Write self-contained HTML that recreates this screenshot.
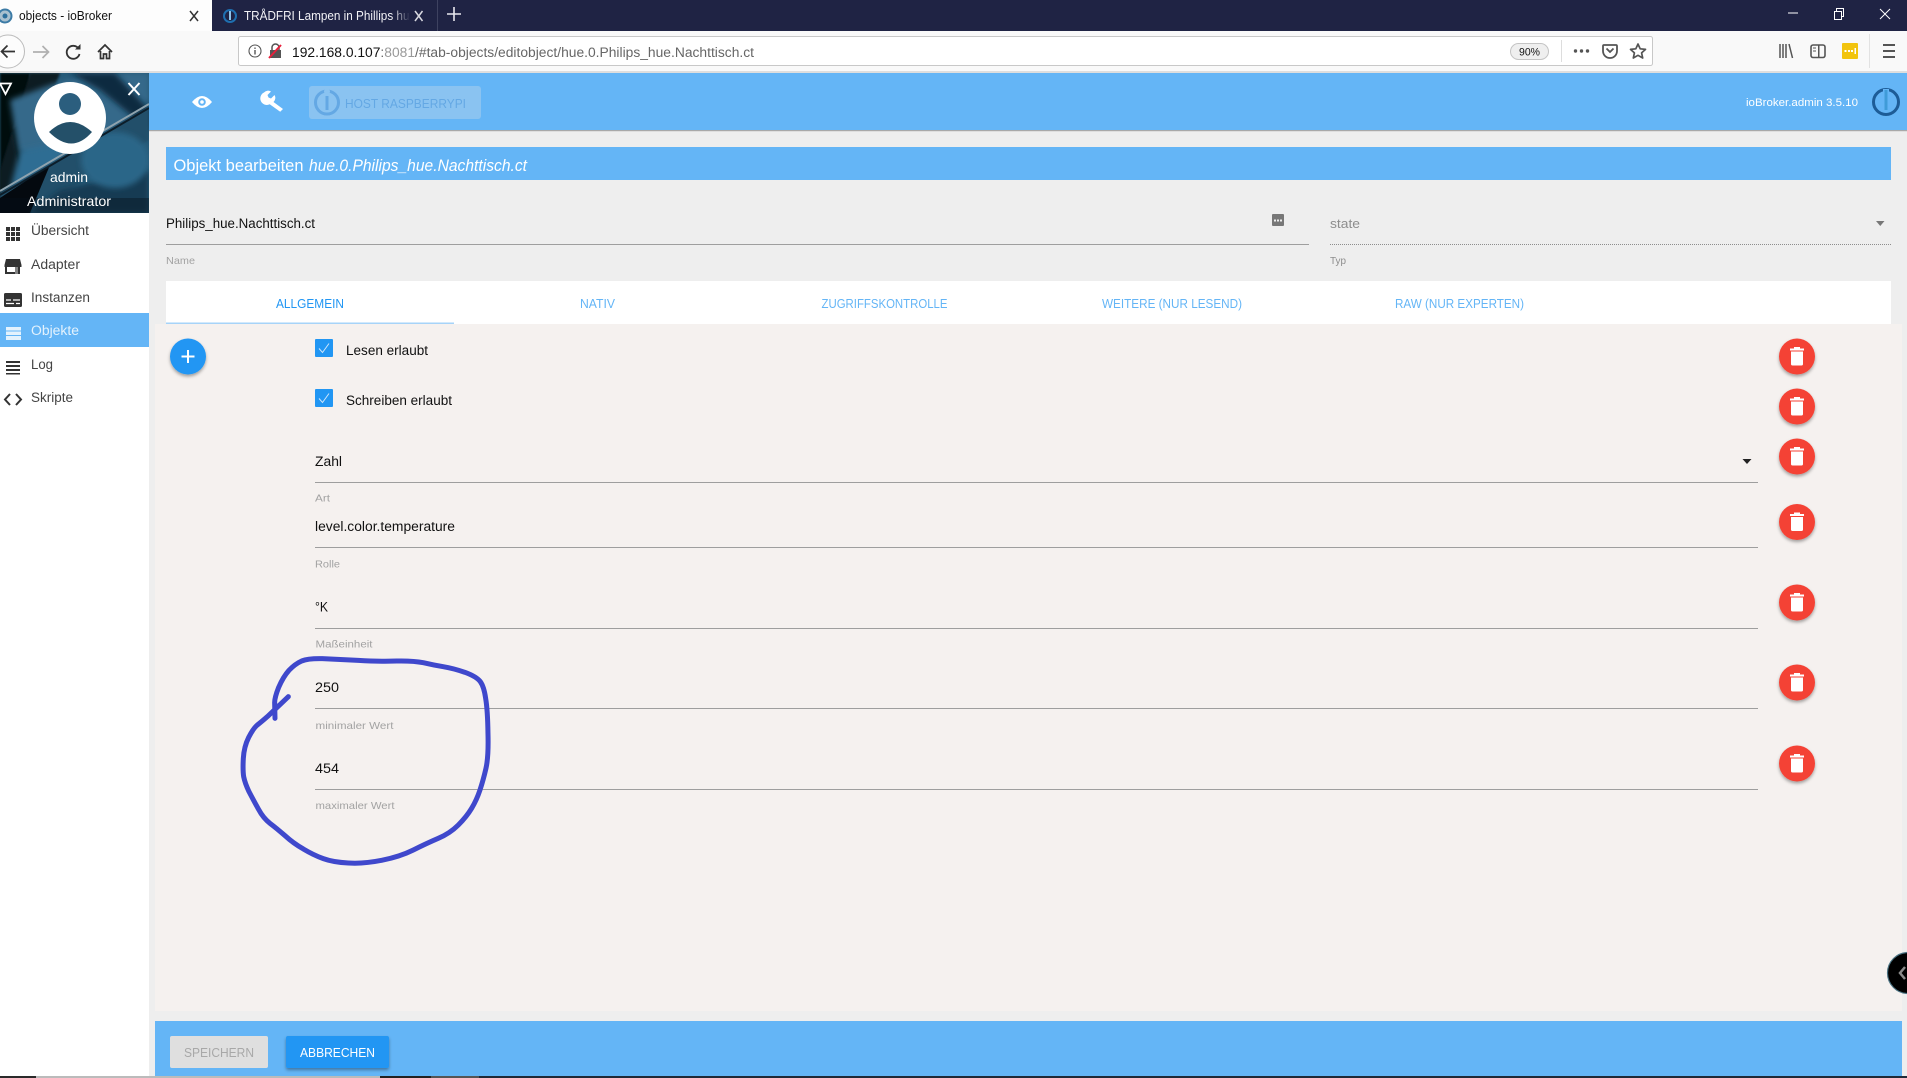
<!DOCTYPE html>
<html lang="de">
<head>
<meta charset="utf-8">
<title>objects - ioBroker</title>
<style>
html,body{margin:0;padding:0;width:1907px;height:1078px;overflow:hidden;background:#eee}
svg{display:block;position:absolute;left:0;top:0}
text{font-family:"Liberation Sans","DejaVu Sans",sans-serif;white-space:pre}
.m{font-size:13.5px;fill:#444}
.l{font-size:10.5px;fill:#a2a2a2}
.v{font-size:13.5px;fill:#111}
.t{font-size:12.5px;fill:#64b5f6}
</style>
</head>
<body>
<svg width="1907" height="1078" viewBox="0 0 1907 1078" xmlns="http://www.w3.org/2000/svg">
<defs>
<clipPath id="av"><rect x="0" y="73" width="149" height="140"/></clipPath>
<clipPath id="tab2"><rect x="212" y="0" width="198" height="31"/></clipPath>
<filter id="b3" x="-30%" y="-30%" width="160%" height="160%"><feGaussianBlur stdDeviation="3"/></filter>
<filter id="b1" x="-30%" y="-30%" width="160%" height="160%"><feGaussianBlur stdDeviation="1"/></filter>
<filter id="sh" x="-30%" y="-30%" width="160%" height="170%"><feDropShadow dx="0" dy="2" stdDeviation="1.6" flood-color="#000" flood-opacity=".35"/></filter>
<linearGradient id="fade" x1="0" x2="1"><stop offset="0" stop-color="#1f2344" stop-opacity="0"/><stop offset="1" stop-color="#1f2344"/></linearGradient>
<g id="trash">
<circle r="18" fill="#f44336" filter="url(#sh)"/>
<rect x="-7" y="-8" width="14" height="2" fill="#fff"/>
<rect x="-3" y="-9.5" width="6" height="2" fill="#fff"/>
<path d="M-6-5H6V7.5Q6 9 4.500 9H-4.500Q-6 9-6 7.500Z" fill="#fff"/>
</g>
<g id="chk">
<rect width="18" height="18" rx="1" fill="#2196f3"/>
<path d="M4 9.500L7.500 13.500L14 4.500" fill="none" stroke="#cfe6fb" stroke-width="1"/>
</g>
</defs>

<!-- browser chrome -->
<rect width="1907" height="31" fill="#1f2344"/>
<rect width="212" height="31" fill="#fdfdfd"/>
<rect y="31" width="1907" height="40" fill="#f9f9f9"/>
<rect y="71" width="1907" height="2" fill="#dedede"/>

<circle cx="5" cy="16" r="6.500" fill="#a9c0cf" stroke="#3c7ba6" stroke-width="2"/>
<circle cx="5" cy="16" r="2.500" fill="#2d6f9c"/>
<text x="19" y="20" font-size="12.500" fill="#111" textLength="93" lengthAdjust="spacingAndGlyphs">objects - ioBroker</text>
<path d="M190 11l8 10M198 11l-8 10" stroke="#333" stroke-width="1.500"/>
<circle cx="230" cy="16" r="6" fill="none" stroke="#1e6fb0" stroke-width="2"/>
<rect x="229" y="11" width="2" height="9" fill="#8fc4ea"/>
<g clip-path="url(#tab2)"><text x="244" y="20" font-size="12.500" fill="#f2f2f6" textLength="172" lengthAdjust="spacingAndGlyphs">TRÅDFRI Lampen in Phillips hue</text></g>
<rect x="392" y="3" width="18" height="26" fill="url(#fade)"/>
<path d="M415 11l7.500 10M422.500 11l-7.500 10" stroke="#d8d8e0" stroke-width="1.500"/>
<rect x="437" y="0" width="1" height="31" fill="#3e4260"/>
<path d="M454 7v14M447 14h14" stroke="#e8e8ee" stroke-width="1.600"/>
<path d="M1788 13h10" stroke="#fff" stroke-width="1"/>
<rect x="1834.500" y="11.500" width="7" height="8" fill="none" stroke="#fff"/>
<path d="M1836.500 11V8.500h7V16.500H1842" fill="none" stroke="#fff"/>
<path d="M1880 9l10 10M1890 9l-10 10" stroke="#fff" stroke-width="1"/>

<circle cx="8" cy="51.500" r="16.500" fill="#fcfcfc" stroke="#bbb"/>
<path d="M15 51.500H2M7.500 45.500l-6 6 6 6" fill="none" stroke="#333" stroke-width="1.700"/>
<path d="M33 52H48M42.500 46l6 6-6 6" fill="none" stroke="#b0b0b0" stroke-width="1.700"/>
<path d="M78.500 48.500A6.500 6.500 0 1 0 79.500 54" fill="none" stroke="#333" stroke-width="1.800"/>
<path d="M75 49.500h5.500V44z" fill="#333"/>
<path d="M98 52l7-7 7 7M100.500 51v7.500h3V54h3v4.500h3V51" fill="none" stroke="#333" stroke-width="1.700"/>

<rect x="238.500" y="36.500" width="1414" height="29" rx="2" fill="#fff" stroke="#c8c8c8"/>
<circle cx="255" cy="51" r="6" fill="none" stroke="#555" stroke-width="1.100"/>
<rect x="254.300" y="50" width="1.400" height="4.500" fill="#555"/><rect x="254.300" y="47.500" width="1.400" height="1.400" fill="#555"/>
<rect x="270" y="50" width="11" height="8" fill="#555"/>
<path d="M272 50v-2.500a3.500 3.500 0 0 1 7 0V50" fill="none" stroke="#555" stroke-width="1.500"/>
<path d="M269 58L281 45" stroke="#e8203c" stroke-width="2"/>
<text x="292" y="57" font-size="13.500" fill="#666" textLength="462" lengthAdjust="spacingAndGlyphs"><tspan fill="#111">192.168.0.107</tspan>:<tspan fill="#999">8081</tspan>/#tab-objects/editobject/hue.0.Philips_hue.Nachttisch.ct</text>
<rect x="1510.500" y="43.500" width="38" height="16" rx="8" fill="#efefef" stroke="#c4c4c4"/>
<text x="1519" y="55.500" font-size="11" fill="#111" textLength="21" lengthAdjust="spacingAndGlyphs">90%</text>
<rect x="1561" y="40" width="1" height="22" fill="#ddd"/>
<g fill="#555"><circle cx="1575.500" cy="51" r="1.700"/><circle cx="1581.500" cy="51" r="1.700"/><circle cx="1587.500" cy="51" r="1.700"/></g>
<path d="M1603 46a1 1 0 0 1 1-1h12a1 1 0 0 1 1 1v5a7 7 0 0 1-14 0z" fill="none" stroke="#555" stroke-width="1.800"/>
<path d="M1606.500 48.500l3.500 3.500 3.500-3.500" fill="none" stroke="#555" stroke-width="1.800"/>
<path d="M1638 44l2.200 4.800 5.300.6-3.900 3.500 1.100 5.100-4.700-2.700-4.700 2.700 1.100-5.100-3.900-3.500 5.300-.6z" fill="none" stroke="#555" stroke-width="1.700" stroke-linejoin="round"/>
<path d="M1780 44v14M1783 44v14M1786 44v14M1789 44l3.500 14" stroke="#555" stroke-width="1.500" fill="none"/>
<rect x="1811" y="45" width="14" height="12.500" rx="2" fill="none" stroke="#555" stroke-width="1.600"/>
<rect x="1818" y="45" width="1.500" height="12" fill="#555"/><path d="M1813 48h3M1813 51h3" stroke="#555"/>
<rect x="1842" y="43" width="16" height="16" rx="1" fill="#f2c40e"/>
<g fill="#fff"><rect x="1844.500" y="50" width="2" height="2"/><rect x="1848" y="50" width="2" height="2"/><rect x="1851" y="50" width="2" height="2"/><rect x="1854.500" y="48" width="1.500" height="6"/></g>
<rect x="1869" y="34" width="1" height="34" fill="#e2e2e2"/>
<path d="M1883 45h12M1883 51h12M1883 57h12" stroke="#555" stroke-width="2"/>

<!-- header -->
<rect x="149" y="73" width="1758" height="57" fill="#64b5f6"/>
<rect x="149" y="130" width="1758" height="1" fill="#a8a8a8"/>
<rect x="149" y="131" width="1758" height="1" fill="#dedede"/>
<path d="M192 102q10-12 20 0q-10 12-20 0z" fill="#fff"/>
<circle cx="202" cy="102" r="3.800" fill="#64b5f6"/><circle cx="202" cy="102" r="1.800" fill="#fff"/>
<path d="M263 93.500a5.500 5.500 0 0 1 7-1l-3.500 3.500 1 2.500 2.500 1 3.500-3.500a5.500 5.500 0 0 1-1 7L282 110l-2.800 2.800-10.500-7.500a5.500 5.500 0 0 1-5.700-11.800z" fill="#fff" transform="translate(1 -1)"/>
<rect x="309" y="86" width="172" height="33" rx="3" fill="#8ac3f1"/>
<circle cx="327" cy="102.500" r="11.500" fill="none" stroke="#64a8e4" stroke-width="3"/>
<rect x="325.500" y="96" width="3" height="14" fill="#64a8e4"/>
<circle cx="327" cy="91.500" r="3" fill="#8ac3f1"/>
<text x="345" y="108" font-size="13" fill="#64a8e4" textLength="121" lengthAdjust="spacingAndGlyphs">HOST RASPBERRYPI</text>
<text x="1746" y="106" font-size="11" fill="#fff" textLength="112" lengthAdjust="spacingAndGlyphs">ioBroker.admin 3.5.10</text>
<circle cx="1886" cy="102" r="12.500" fill="none" stroke="#1d5c97" stroke-width="3"/>
<rect x="1883" y="89" width="6" height="4" fill="#64b5f6"/>
<rect x="1884.500" y="90" width="3" height="20" fill="#3f9bd8"/>

<!-- sidebar -->
<rect x="0" y="213" width="149" height="863" fill="#fff"/>
<g clip-path="url(#av)">
<rect x="0" y="73" width="149" height="140" fill="#265a78"/>
<rect x="0" y="73" width="30" height="140" fill="#05090d" filter="url(#b1)"/>
<path d="M0 170L30 73H60L50 100L12 130L20 175L0 215z" fill="#0b1a24" filter="url(#b1)"/>
<path d="M10 100L50 85L90 73H149L149 100L60 180L18 150z" fill="#36698a" filter="url(#b3)"/>
<path d="M70 73L115 73L149 110V130L100 90z" fill="#0f2c40" filter="url(#b3)"/>
<path d="M20 150L70 140L40 190L10 190z" fill="#2e6d93" filter="url(#b3)"/>
<path d="M0 192L149 106V140L60 195L0 213z" fill="#234f6a" filter="url(#b1)"/>
<path d="M0 198L50 165L30 213H0z" fill="#04090f"/>
<path d="M30 213L60 190L149 170V213z" fill="#163a52" filter="url(#b3)"/>
<ellipse cx="115" cy="160" rx="34" ry="28" fill="#2c6688" filter="url(#b3)"/>
<path d="M0 191L149 104" stroke="#8fa3ae" stroke-width="2"/>
<path d="M0 195L149 108" stroke="#0c1d29" stroke-width="2"/>
<rect x="0" y="198" width="149" height="15" fill="#05101a" opacity=".4"/>
</g>
<circle cx="70" cy="118" r="36" fill="#fff"/>
<circle cx="70" cy="104" r="11" fill="#2b5e7e"/>
<path d="M49 132Q70 112 92 132Q72 155 49 132z" fill="#245069"/>
<path d="M0 83.500H11L5.500 94z" fill="none" stroke="#fff" stroke-width="1.800"/>
<path d="M128.500 83l11 12M139.500 83l-11 12" stroke="#fff" stroke-width="2"/>
<text x="50" y="182" font-size="14" fill="#fff" textLength="38" lengthAdjust="spacingAndGlyphs">admin</text>
<text x="27" y="206" font-size="14" fill="#fff" textLength="84" lengthAdjust="spacingAndGlyphs">Administrator</text>

<rect x="0" y="313" width="149" height="34" fill="#64b5f6"/>
<text class="m" x="31" y="235" textLength="58" lengthAdjust="spacingAndGlyphs">Übersicht</text>
<text class="m" x="31" y="269" textLength="49" lengthAdjust="spacingAndGlyphs">Adapter</text>
<text class="m" x="31" y="302" textLength="59" lengthAdjust="spacingAndGlyphs">Instanzen</text>
<text class="m" x="31" y="335" style="fill:#e3f2fd" textLength="48" lengthAdjust="spacingAndGlyphs">Objekte</text>
<text class="m" x="31" y="369" textLength="22" lengthAdjust="spacingAndGlyphs">Log</text>
<text class="m" x="31" y="402" textLength="42" lengthAdjust="spacingAndGlyphs">Skripte</text>
<g fill="#333">
<rect x="6" y="227" width="4" height="4"/><rect x="11" y="227" width="4" height="4"/><rect x="16" y="227" width="4" height="4"/>
<rect x="6" y="232" width="4" height="4"/><rect x="11" y="232" width="4" height="4"/><rect x="16" y="232" width="4" height="4"/>
<rect x="6" y="237" width="4" height="4"/><rect x="11" y="237" width="4" height="4"/><rect x="16" y="237" width="4" height="4"/>
<path d="M6 259H20L21.500 265V267H20V274H5V267H4.500V265z"/>
<rect x="4" y="293" width="18" height="14" rx="1.500"/>
<rect x="6" y="361" width="14" height="2"/><rect x="6" y="365" width="14" height="2"/><rect x="6" y="369" width="14" height="2"/><rect x="6" y="373" width="14" height="1.500"/>
</g>
<rect x="7" y="267" width="8" height="5" fill="#fff"/>
<rect x="15" y="267" width="3" height="7" fill="#fff" opacity=".4"/>
<path d="M6 300h5M13 300h7M6 303.500h8M16 303.500h4" stroke="#fff" stroke-width="1.200"/>
<g fill="#e3f2fd"><rect x="6" y="327" width="15" height="3.500"/><rect x="6" y="331.500" width="15" height="3.500"/><rect x="6" y="336" width="15" height="4"/></g>
<path d="M10 394l-5 5.500 5 5.500M16 394l5 5.500-5 5.500" fill="none" stroke="#333" stroke-width="2"/>

<!-- title -->
<rect x="166" y="147" width="1725" height="33" fill="#64b5f6"/>
<text x="173.500" y="171" font-size="16.500" fill="#fff" textLength="130" lengthAdjust="spacingAndGlyphs">Objekt bearbeiten</text>
<text x="309" y="171" font-size="16.500" font-style="italic" fill="#fff" textLength="218" lengthAdjust="spacingAndGlyphs">hue.0.Philips_hue.Nachttisch.ct</text>

<!-- name/type -->
<text class="v" x="166" y="228" textLength="149" lengthAdjust="spacingAndGlyphs">Philips_hue.Nachttisch.ct</text>
<rect x="166" y="244" width="1143" height="1" fill="#9e9e9e"/>
<text class="l" x="166" y="264" textLength="29" lengthAdjust="spacingAndGlyphs">Name</text>
<rect x="1272" y="214" width="12" height="12" rx="1" fill="#777"/>
<g fill="#eee"><rect x="1274" y="219.500" width="2" height="2"/><rect x="1277" y="219.500" width="2" height="2"/><rect x="1280" y="219.500" width="2" height="2"/></g>
<text x="1330" y="228" font-size="13" fill="#8d8d8d" textLength="30" lengthAdjust="spacingAndGlyphs">state</text>
<path d="M1330 244.500H1891" stroke="#8d8d8d" stroke-dasharray="1 1"/>
<text x="1330" y="264" font-size="10.500" fill="#8d8d8d" textLength="16" lengthAdjust="spacingAndGlyphs">Typ</text>
<path d="M1876 221H1884.500L1880.250 226z" fill="#777"/>

<!-- tabs -->
<rect x="166" y="281" width="1725" height="43" fill="#fff"/>
<text class="t" x="276" y="308" style="fill:#2196f3" textLength="68" lengthAdjust="spacingAndGlyphs">ALLGEMEIN</text>
<text class="t" x="580" y="308" textLength="35" lengthAdjust="spacingAndGlyphs">NATIV</text>
<text class="t" x="821.500" y="308" textLength="126" lengthAdjust="spacingAndGlyphs">ZUGRIFFSKONTROLLE</text>
<text class="t" x="1102" y="308" textLength="140" lengthAdjust="spacingAndGlyphs">WEITERE (NUR LESEND)</text>
<text class="t" x="1395" y="308" textLength="129" lengthAdjust="spacingAndGlyphs">RAW (NUR EXPERTEN)</text>

<!-- panel -->
<rect x="155" y="324" width="1747" height="687" fill="#f5f1ef"/>
<rect x="166" y="322.500" width="288" height="1.500" fill="#a6d3f8"/>

<circle cx="188" cy="356.500" r="18" fill="#2196f3" filter="url(#sh)"/>
<path d="M188 350v13M181.500 356.500h13" stroke="#fff" stroke-width="2"/>

<use href="#chk" x="315" y="339"/>
<use href="#chk" x="315" y="389"/>
<text class="v" x="346" y="355" textLength="82" lengthAdjust="spacingAndGlyphs">Lesen erlaubt</text>
<text class="v" x="346" y="405" textLength="106" lengthAdjust="spacingAndGlyphs">Schreiben erlaubt</text>

<text class="v" x="315" y="466" textLength="27" lengthAdjust="spacingAndGlyphs">Zahl</text>
<path d="M1742.500 459H1751.500L1747 464z" fill="#222"/>
<rect x="315" y="482" width="1443" height="1" fill="#9e9e9e"/>
<text class="l" x="315" y="501.500" textLength="15" lengthAdjust="spacingAndGlyphs">Art</text>
<text class="v" x="315" y="531" textLength="140" lengthAdjust="spacingAndGlyphs">level.color.temperature</text>
<rect x="315" y="547" width="1443" height="1" fill="#9e9e9e"/>
<text class="l" x="315" y="567.500" textLength="25" lengthAdjust="spacingAndGlyphs">Rolle</text>
<text class="v" x="315" y="611.500" textLength="13" lengthAdjust="spacingAndGlyphs">°K</text>
<rect x="315" y="628" width="1443" height="1" fill="#9e9e9e"/>
<text class="l" x="315.500" y="647.500" textLength="57" lengthAdjust="spacingAndGlyphs">Maßeinheit</text>
<text class="v" x="315" y="692" textLength="24" lengthAdjust="spacingAndGlyphs">250</text>
<rect x="315" y="708" width="1443" height="1" fill="#9e9e9e"/>
<text class="l" x="315.500" y="729" textLength="78" lengthAdjust="spacingAndGlyphs">minimaler Wert</text>
<text class="v" x="315" y="773" textLength="24" lengthAdjust="spacingAndGlyphs">454</text>
<rect x="315" y="789" width="1443" height="1" fill="#9e9e9e"/>
<text class="l" x="315.500" y="809" textLength="79" lengthAdjust="spacingAndGlyphs">maximaler Wert</text>

<use href="#trash" x="1797" y="356.500"/>
<use href="#trash" x="1797" y="406.500"/>
<use href="#trash" x="1797" y="456.500"/>
<use href="#trash" x="1797" y="522"/>
<use href="#trash" x="1797" y="602.500"/>
<use href="#trash" x="1797" y="682.500"/>
<use href="#trash" x="1797" y="763.500"/>

<!-- hand-drawn circle -->
<g transform="translate(220 640) scale(.3333)" fill="none" stroke="#3f48cc" stroke-width="15" stroke-linecap="round" stroke-linejoin="round">
<path d="M165 235L164 190Q163 175 176 142Q190 110 207 91Q225 72 245 63Q265 55 307 56Q350 58 415 61Q480 65 530 63Q580 62 610 68Q640 75 670 80Q700 85 735 97Q770 110 781 125Q792 140 797 175Q803 210 804 280Q806 350 798 385Q790 420 780 450Q770 480 755 505Q740 530 715 555Q690 580 655 595Q620 610 580 630Q540 650 485 661Q430 672 385 669Q340 667 310 656Q280 645 250 627Q220 610 195 587Q170 565 150 550Q130 535 115 507Q100 480 87 455Q75 430 71 410Q68 390 70 355Q72 320 86 292Q100 265 112 255Q125 245 142 230L205 170"/>
</g>

<!-- bottom bar -->
<rect x="155" y="1021" width="1747" height="55" fill="#64b5f6"/>
<rect x="170" y="1036" width="98" height="32" rx="2" fill="#dfdfdf"/>
<text x="184" y="1057" font-size="13" fill="#a8a8a8" textLength="70" lengthAdjust="spacingAndGlyphs">SPEICHERN</text>
<rect x="286" y="1036" width="103" height="32" rx="2" fill="#2196f3" filter="url(#sh)"/>
<text x="300" y="1057" font-size="13" fill="#fff" textLength="75" lengthAdjust="spacingAndGlyphs">ABBRECHEN</text>

<!-- chat bubble -->
<circle cx="1908" cy="973" r="20.500" fill="#000" stroke="#4a7282" stroke-width="1.200"/>
<path d="M1905 967l-5 6 5 6" fill="none" stroke="#8a8a8a" stroke-width="2.500"/>

<!-- bottom strip -->
<rect x="0" y="1076" width="1907" height="2" fill="#1f2a38"/>
<rect x="0" y="1076" width="36" height="2" fill="#2a2a2a"/>
<rect x="36" y="1076" width="344" height="2" fill="#bbb"/>
<rect x="380" y="1076" width="51" height="2" fill="#222"/>
<rect x="431" y="1076" width="48" height="2" fill="#555"/>
</svg>
</body>
</html>
